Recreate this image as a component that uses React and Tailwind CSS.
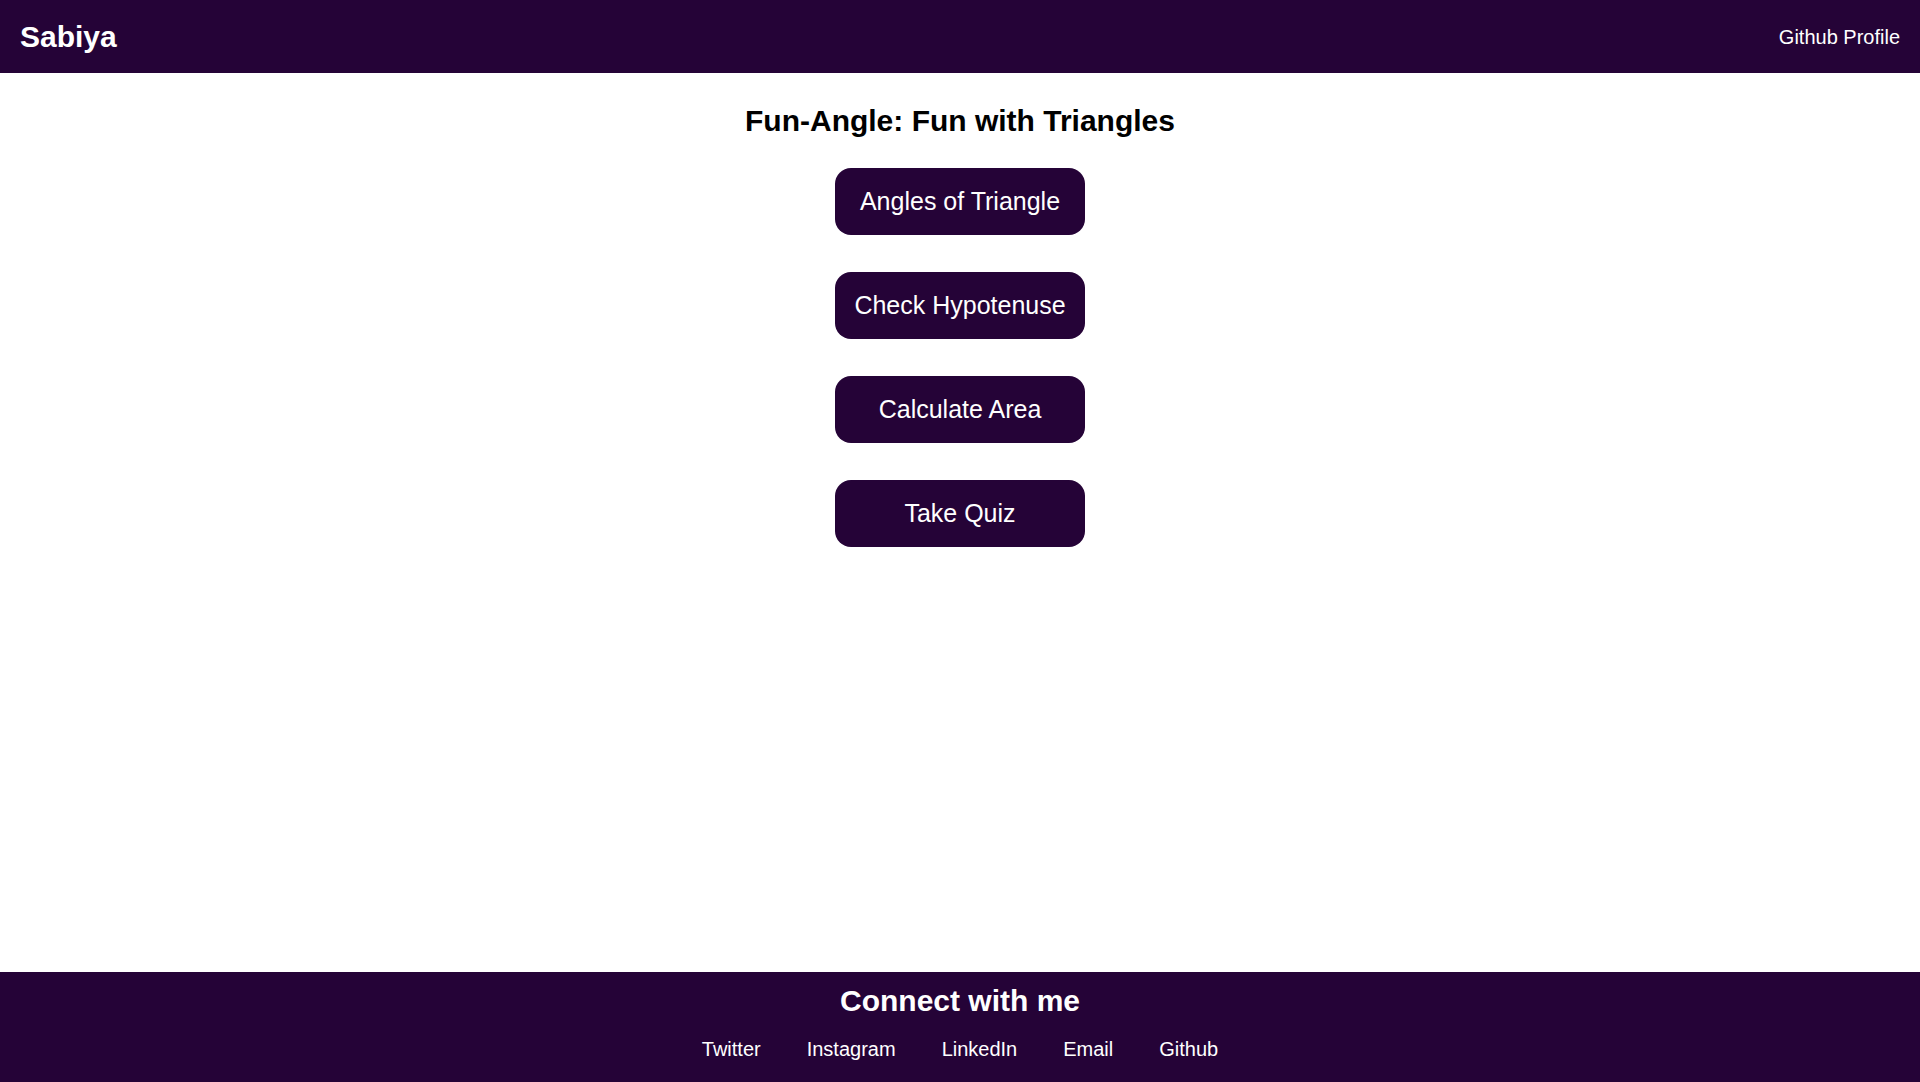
import React from "react";

const links = ["Twitter", "Instagram", "LinkedIn", "Email", "Github"];
const actions = ["Angles of Triangle", "Check Hypotenuse", "Calculate Area", "Take Quiz"];

export default function App() {
  return (
    <div
      className="min-h-screen flex flex-col bg-white"
      style={{ fontFamily: '"Liberation Sans", Arial, sans-serif' }}
    >
      {/* Navbar */}
      <nav className="h-[73px] bg-[#250337] text-white flex items-center justify-between pl-5 pr-5">
        <span className="text-[30px] leading-[34px] font-bold">Sabiya</span>
        <a href="#" className="text-[20px] leading-[23px] pt-[2px]">Github Profile</a>
      </nav>

      {/* Main */}
      <main className="flex-1 flex flex-col items-center pt-[31px]">
        <h1 className="text-[30px] leading-[34px] font-bold text-black">
          Fun-Angle: Fun with Triangles
        </h1>
        <div className="mt-[30px] flex flex-col items-center gap-[37px]">
          {actions.map((label) => (
            <button
              key={label}
              className="w-[250px] h-[67px] rounded-2xl bg-[#250337] text-white text-[25px] flex items-center justify-center"
            >
              {label}
            </button>
          ))}
        </div>
      </main>

      {/* Footer */}
      <footer className="h-[110px] bg-[#250337] text-white flex flex-col items-center pt-[12px]">
        <h2 className="text-[30px] leading-[34px] font-bold">Connect with me</h2>
        <ul className="mt-[20px] flex gap-[46px] text-[20px] leading-[23px]">
          {links.map((l) => (
            <li key={l}>
              <a href="#">{l}</a>
            </li>
          ))}
        </ul>
      </footer>
    </div>
  );
}
